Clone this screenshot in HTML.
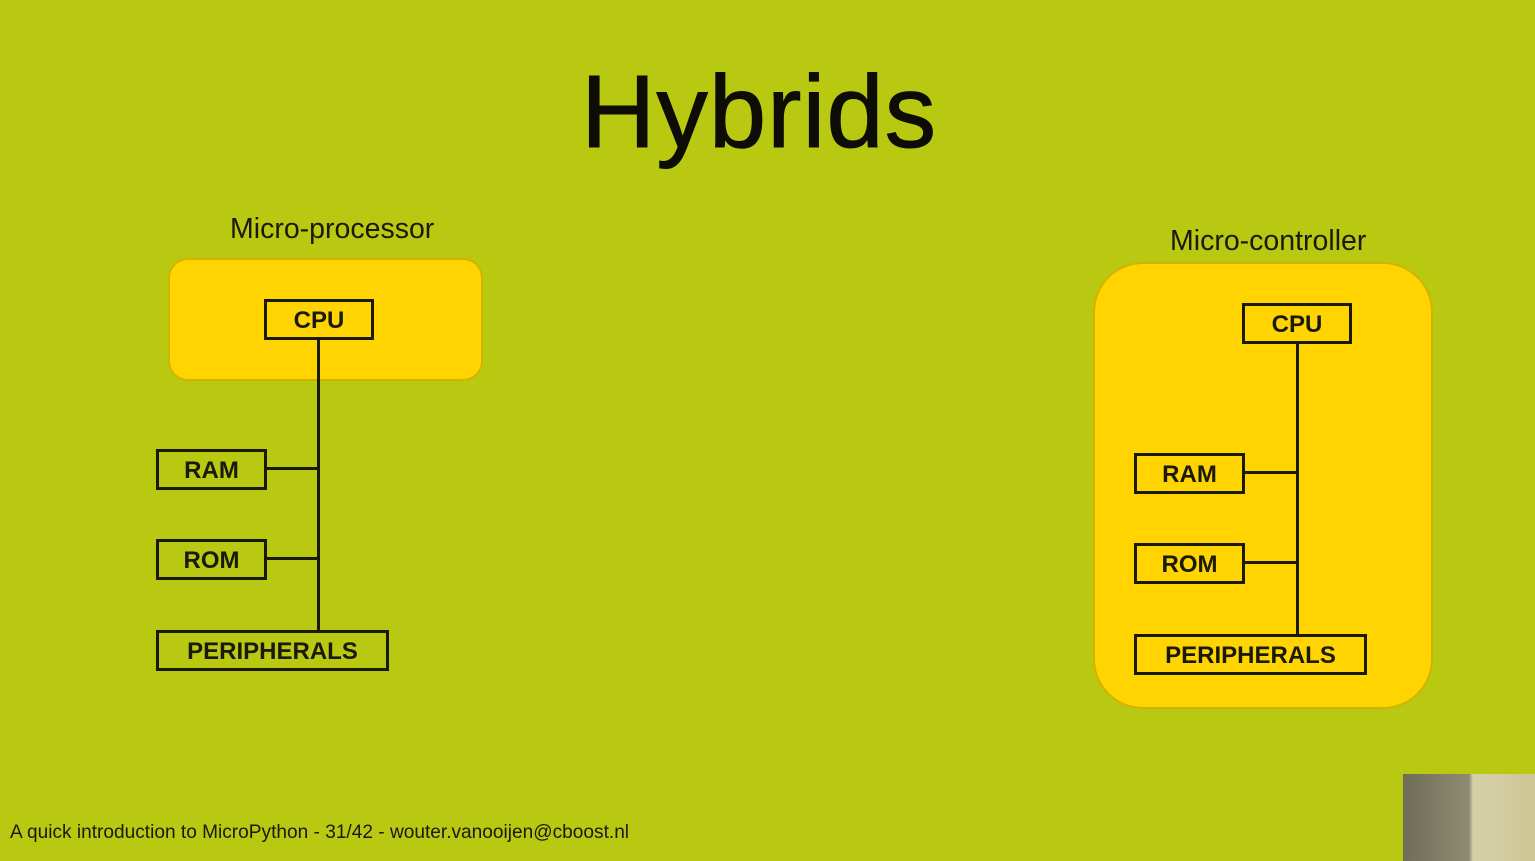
<!DOCTYPE html><html><head><style>
body{margin:0;width:1535px;height:861px;background:#b9c912;position:relative;overflow:hidden;font-family:"Liberation Sans",sans-serif}
div{position:absolute;box-sizing:border-box}
.bx{border:3px solid #1a1a0a;font-weight:bold;font-size:24px;color:#1a1a0a;text-align:center;line-height:38px}
.l{background:#1a1a0a}
.lab{font-size:28.5px;color:#1a1a0a}
</style></head><body>
<div style="left:581px;top:53px;font-size:103px;letter-spacing:1px;color:#0d0d05;-webkit-text-stroke:1px #0d0d05">Hybrids</div>
<div class="lab" style="left:230px;top:213px">Micro-processor</div>
<div class="lab" style="left:1170px;top:225px">Micro-controller</div>
<div style="left:168px;top:258px;width:315px;height:123px;background:#ffd400;border:2px solid #d2b300;border-radius:20px"></div>
<div style="left:1093px;top:262px;width:340px;height:447px;background:#ffd400;border:2px solid #d2b300;border-radius:50px"></div>
<div class="l" style="left:317px;top:338px;width:3px;height:294px"></div>
<div class="l" style="left:266px;top:467px;width:52px;height:3px"></div>
<div class="l" style="left:266px;top:557px;width:52px;height:3px"></div>
<div class="bx" style="left:264px;top:299px;width:110px;height:41px">CPU</div>
<div class="bx" style="left:156px;top:449px;width:111px;height:41px">RAM</div>
<div class="bx" style="left:156px;top:539px;width:111px;height:41px">ROM</div>
<div class="bx" style="left:156px;top:630px;width:233px;height:41px">PERIPHERALS</div>
<div class="l" style="left:1296px;top:342px;width:3px;height:294px"></div>
<div class="l" style="left:1244px;top:471px;width:52px;height:3px"></div>
<div class="l" style="left:1244px;top:561px;width:52px;height:3px"></div>
<div class="bx" style="left:1242px;top:303px;width:110px;height:41px">CPU</div>
<div class="bx" style="left:1134px;top:453px;width:111px;height:41px">RAM</div>
<div class="bx" style="left:1134px;top:543px;width:111px;height:41px">ROM</div>
<div class="bx" style="left:1134px;top:634px;width:233px;height:41px">PERIPHERALS</div>
<div style="left:10px;top:822px;font-size:19.1px;color:#1a1a0a">A quick introduction to MicroPython - 31/42 - wouter.vanooijen@cboost.nl</div>
<div style="left:1403px;top:774px;width:132px;height:87px;background:linear-gradient(90deg,#6f6c58 0%,#8f8b72 50%,#d6d0a8 53%,#cdc796 100%)"></div>
</body></html>
